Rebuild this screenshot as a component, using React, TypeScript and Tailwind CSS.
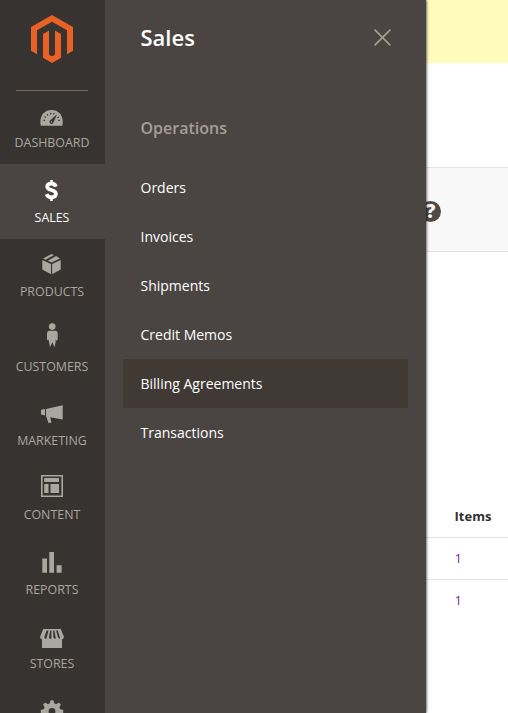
import type { ReactNode } from "react";

const Logo = () => (
  <svg width="42" height="48" viewBox="0 0 42 48" fill="#eb6024" className="block">
    <path d="M21 0 42 12V35.8L36 39.3V15.2L21 6.7 6 15.2V39.3L0 35.8V12Z" />
    <path d="M18 15.5V38.6Q18 40.8 21 41Q24 40.8 24 38.6V15.5L30 19V42.8L21 48 12 42.8V19Z" />
  </svg>
);

const Glyph = ({ children }: { children: ReactNode }) => (
  <svg width="24" height="25" viewBox="0 0 24 25" className="block shrink-0 overflow-visible" fill="currentColor">
    {children}
  </svg>
);

const DashboardIcon = () => (
  <Glyph>
    <path d="M.8 22.7Q.4 21 .4 18.6C.4 11.8 5 7 11.6 7S22.7 11.8 22.7 18.6Q22.7 21 22.3 22.7Z" />
    <path
      d="M3.5 17.3H5M4.4 13.8l1.4.6M7 11.2l1 1.1M10.6 9.8l.2 1.5M14 10l-.3 1.4M18.8 14l-1.4.7M19.8 17.3h-1.5"
      stroke="#373330"
      strokeWidth="1.2"
    />
    <path d="M17 11.2 10 17.6A2 2 0 1 0 13.2 20Z" fill="#373330" />
    <circle cx="11.6" cy="18.9" r=".7" />
  </Glyph>
);

const SalesIcon = () => (
  <Glyph>
    <path
      d="M15.9 8.6C15.2 6.6 13.6 5.7 11.5 5.7 9 5.7 7.2 6.8 7.2 8.7 7.2 12.9 15.9 11.2 15.9 15.8 15.9 18.1 14 19.3 11.5 19.3 9.2 19.3 7.4 18.3 6.7 16.1"
      fill="none"
      stroke="currentColor"
      strokeWidth="3.7"
    />
    <path d="M10.2 2h2.6v4h-2.6zM10.2 19h2.6v4h-2.6z" />
  </Glyph>
);

const ProductsIcon = () => (
  <Glyph>
    <path d="M2.3 8 11 12V22.2L2.3 17.6ZM20.7 8 12.1 12V22.2L20.7 17.6ZM11.5 2 14 3.1 5.7 7.8 3 6.6ZM16.1 4 20 6.4 11.6 10.6 7.8 8.8Z" />
  </Glyph>
);

const CustomersIcon = () => (
  <Glyph>
    <circle cx="12.2" cy="-.4" r="3.3" />
    <path d="M9.3 3.7H15.4Q17.7 3.9 17.7 6.3V12.5L16.3 13.7 15.7 12V14.4L14.6 20.2 12.3 15.2 10 20.2 8.9 14.4V12L8.3 13.7 7 12.5V6.3Q7 3.9 9.3 3.7Z" />
  </Glyph>
);

const MarketingIcon = () => (
  <Glyph>
    <path d="M6 7.9 22.7 4.3V18.6L10.1 16.3 11.6 21.6 8.4 22 6.1 15.1ZM1 8.8 5 8V14.6L1 13.6Z" />
  </Glyph>
);

const ContentIcon = () => (
  <Glyph>
    <path d="M1.8.8H22.2V21.2H1.8Z" fill="none" stroke="currentColor" strokeWidth="1.6" />
    <path d="M4.2 3.1H19V7H4.2ZM4.2 9H8.5V17.9H4.2ZM10.5 9H19V17.9H10.5Z" />
  </Glyph>
);

const ReportsIcon = () => (
  <Glyph>
    <path d="M2.3 8.5H7V22.7H2.3ZM9.3 2H14V22.7H9.3ZM16.6 15.3H21.6V22.7H16.6Z" />
  </Glyph>
);

const StoresIcon = () => (
  <Glyph>
    <path d="M3.2 5H20.8L24 13Q23.8 15 22 15.4V24H2V15.4Q.2 15 0 13Z" />
    <path
      d="M6.6 6.5H8.5L6.4 14.7Q5 15 4.2 13.4ZM10.2 6.5H11.4V14.6Q9.8 15 8.9 13.7ZM13.2 6.5H14.4L15.8 14.5Q14.1 15 13.4 13.5ZM16.1 6.5H17.7L20.2 14.5Q18.6 15 18 13.3Z"
      fill="#373330"
    />
  </Glyph>
);

const TEETH = [0, 45, 90, 135, 180, 225, 270, 315];

const SystemIcon = () => (
  <Glyph>
    <circle cx="12" cy="12.5" r="6" fill="none" stroke="currentColor" strokeWidth="5.2" />
    {TEETH.map((angle) => (
      <path key={angle} d="M9.6 5 10.6 1.3H13.4L14.4 5Z" transform={`rotate(${angle} 12 12.5)`} />
    ))}
  </Glyph>
);

const sections = [
  { label: "Dashboard", icon: <DashboardIcon />, height: "h-[73px] pt-3" },
  { label: "Sales", icon: <SalesIcon />, height: "h-[75px] pt-3.5", active: true },
  { label: "Products", icon: <ProductsIcon />, height: "h-[74px] pt-[13px]" },
  { label: "Customers", icon: <CustomersIcon />, height: "h-[75px] pt-3.5" },
  { label: "Marketing", icon: <MarketingIcon />, height: "h-[74px] pt-[13px]" },
  { label: "Content", icon: <ContentIcon />, height: "h-[74px] pt-[13px]" },
  { label: "Reports", icon: <ReportsIcon />, height: "h-[75px] pt-3.5" },
  { label: "Stores", icon: <StoresIcon />, height: "h-[74px] pt-[13px]" },
];

const links = ["Orders", "Invoices", "Shipments", "Credit Memos", "Billing Agreements", "Transactions"];

export default function App() {
  return (
    <div className="flex h-[713px] w-[508px] overflow-hidden bg-white font-['Open_Sans','Noto_Sans',sans-serif]">
      <nav className="z-20 flex w-[105px] shrink-0 flex-col overflow-hidden bg-[#373330]">
        <div className="mx-4 flex h-[91px] w-[72px] shrink-0 justify-center border-b border-[#736963] pt-[15px]">
          <Logo />
        </div>
        {sections.map((s) => (
          <a
            key={s.label}
            className={`flex shrink-0 flex-col items-center pr-px ${s.height} ${
              s.active ? "bg-[#4a4542] text-white" : "text-[#aaa6a0]"
            }`}
          >
            {s.icon}
            <span className="mt-1.5 text-[12.4px] leading-[18px] uppercase">{s.label}</span>
          </a>
        ))}
        <a aria-label="System" className="flex shrink-0 flex-col items-center pt-3.5 pr-px text-[#aaa6a0]">
          <SystemIcon />
        </a>
      </nav>

      <aside className="z-10 w-[321px] shrink-0 bg-[#4a4542] pr-[18px] pl-[18px] shadow-[0_0_3px_#000000]">
        <header className="flex h-[74px] items-center justify-between pr-[17px] pl-[17.5px]">
          <h1 className="text-[22px] leading-[30px] font-semibold text-white">Sales</h1>
          <svg width="17" height="17" viewBox="0 0 17 17" className="block" stroke="#a79d95" strokeWidth="1.6">
            <path d="M.6.6 16.4 16.4M16.4.6.6 16.4" />
          </svg>
        </header>
        <h2 className="mt-[42px] pl-[17.5px] text-[16px] leading-6 font-semibold text-[#a79d95]">Operations</h2>
        <ul className="mt-[23px]">
          {links.map((link) => (
            <li
              key={link}
              className={`flex h-[49px] items-center pl-[17.5px] text-[14px] text-white ${
                link === "Billing Agreements" ? "bg-[#403934]" : ""
              }`}
            >
              {link}
            </li>
          ))}
        </ul>
      </aside>

      <main className="flex min-w-0 flex-1 flex-col">
        <div className="h-[63px] shrink-0 bg-[#fffbbb]" />
        <div className="mt-[104px] flex h-[85px] shrink-0 items-center border-y border-[#e3e3e3] bg-[#f8f8f8] pt-[3px]">
          <span className="-ml-1.5 flex size-[21px] items-center justify-center rounded-full bg-[#514943] text-[19px] leading-[21px] font-extrabold text-[#f8f8f8]">
            ?
          </span>
        </div>
        <div className="mt-[243px] text-[13px] text-[#303030]">
          <div className="flex h-[43px] items-center border-b border-[#e3e3e3] pt-px pl-[28.5px] font-bold">Items</div>
          <div className="flex h-[42px] items-center border-b border-[#e3e3e3] pl-[28.5px] text-[#7d1fa0]">1</div>
          <div className="flex h-[42px] items-center pl-[28.5px] text-[#7d1fa0]">1</div>
        </div>
      </main>
    </div>
  );
}
